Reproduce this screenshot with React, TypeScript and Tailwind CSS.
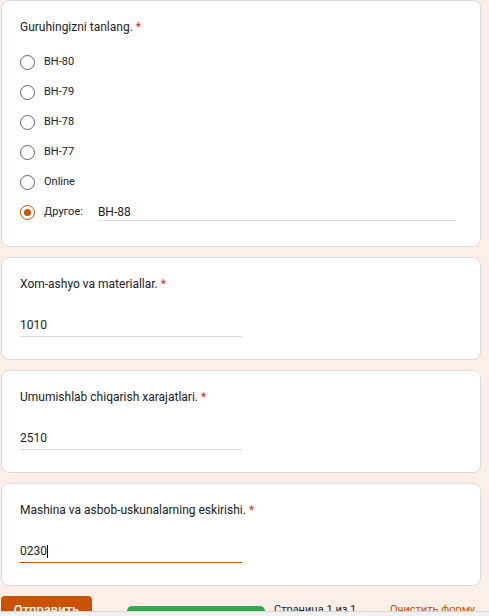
import React from 'react';

const options = ['BH-80', 'BH-79', 'BH-78', 'BH-77', 'Online'];

const questions = [
  { title: 'Xom-ashyo va materiallar.', value: '1010', active: false },
  { title: 'Umumishlab chiqarish xarajatlari.', value: '2510', active: false },
  { title: 'Mashina va asbob-uskunalarning eskirishi.', value: '0230', active: true },
];

const Title = ({ text }: { text: string }) => (
  <div className="text-[12px] leading-[18px] text-[#202124]">
    {text} <span className="text-[#d93025]">*</span>
  </div>
);

const Radio = ({ checked }: { checked?: boolean }) => (
  <span
    className={
      checked
        ? 'flex items-center justify-center w-[15px] h-[15px] rounded-full border-[1.5px] border-[#c85200]'
        : 'flex items-center justify-center w-[15px] h-[15px] rounded-full border-[1.5px] border-[#5f6368]'
    }
  >
    {checked && <span className="w-[7px] h-[7px] rounded-full bg-[#c85200]" />}
  </span>
);

const App = () => {
  return (
    <div
      className="relative h-[616px] overflow-hidden bg-[#fdeee8]"
      style={{ fontFamily: 'Roboto, "Liberation Sans", sans-serif' }}
    >
      <div className="ml-[1px] w-[480px] flex flex-col gap-[10px]">
        {/* first card: group choice */}
        <div className="bg-white border border-[#dadce0] rounded-lg pl-[18px] pr-[24px] pt-[17px] pb-[19px]">
          <Title text="Guruhingizni tanlang." />
          <div className="mt-[11px] flex flex-col">
            {options.map((o) => (
              <div key={o} className="h-[30px] flex items-center">
                <Radio />
                <span className="ml-[9px] text-[11px] text-[#202124]">{o}</span>
              </div>
            ))}
            <div className="h-[30px] flex items-center">
              <Radio checked />
              <span className="ml-[9px] text-[11px] text-[#202124]">Другое:</span>
              <div className="ml-[15px] flex-1 h-[15px] mt-[3px] border-b border-[#dadce0] text-[12px] leading-[12px] text-[#202124]">
                BH-88
              </div>
            </div>
          </div>
        </div>

        {questions.map((q) => (
          <div
            key={q.title}
            className="bg-white border border-[#dadce0] rounded-lg pl-[18px] pr-[24px] pt-[17px] pb-[22px]"
          >
            <Title text={q.title} />
            <div
              className={
                q.active
                  ? 'mt-[23px] w-[222px] h-[21px] border-b-[1.5px] border-[#c85200] flex items-start text-[12px] leading-[18px] text-[#202124]'
                  : 'mt-[23px] w-[222px] h-[21px] border-b border-[#dadce0] flex items-start text-[12px] leading-[18px] text-[#202124]'
              }
            >
              {q.value}
              {q.active && <span className="mt-[3px] w-px h-[13px] bg-black" />}
            </div>
          </div>
        ))}

        {/* footer */}
        <div className="flex items-start">
          <button className="w-[91px] h-[36px] rounded bg-[#c85200] text-white text-[13px] font-medium leading-[18px] pt-[5px] flex justify-center items-start">
            Отправить
          </button>
          <div className="ml-[35px] mt-[10px] w-[138px] h-[10px] rounded-full bg-[#34a853]" />
          <div className="ml-[9px] mt-[5px] text-[11px] leading-[18px] text-[#202124]">Страница 1 из 1</div>
          <div className="ml-auto mr-[6px] mt-[5px] text-[11px] leading-[18px] text-[#c85200]">
            Очистить форму
          </div>
        </div>
      </div>
      <div className="absolute left-0 right-0 bottom-0 h-[5px] bg-[#f1f1f1] border-t border-[#d6d6d6]" />
    </div>
  );
};

export default App;
